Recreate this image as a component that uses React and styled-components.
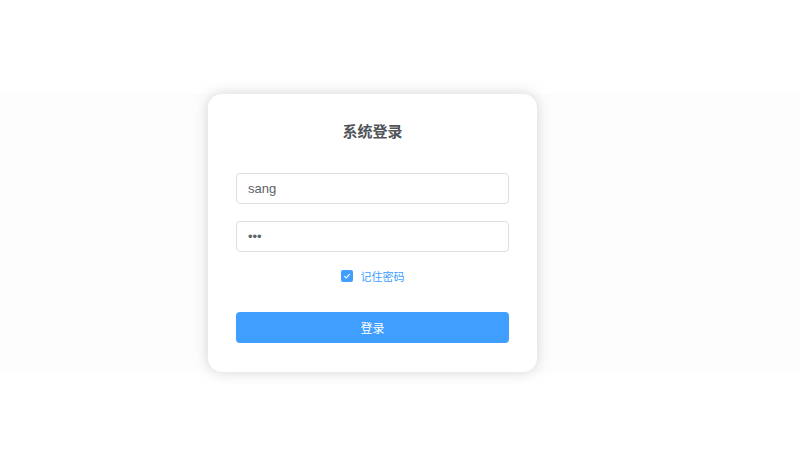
import React from "react";
import styled, { createGlobalStyle } from "styled-components";

const GlobalStyle = createGlobalStyle`
  html, body {
    margin: 0;
    padding: 0;
    background: #ffffff;
    font-family: "Liberation Sans", "Noto Sans CJK SC", Arial, sans-serif;
  }
`;

const Page = styled.div`
  width: 800px;
  height: 452px;
  padding-top: 94px;
  box-sizing: border-box;
`;

const Band = styled.div`
  display: flex;
  background: #fdfdfd;
  padding-left: 208px;
`;

const Card = styled.form`
  width: 329px;
  height: 278px;
  box-sizing: border-box;
  padding: 29px 28px 0;
  background: #ffffff;
  border-radius: 14px;
  box-shadow: 0 0 14px rgba(180, 176, 176, 0.55);
  display: flex;
  flex-direction: column;
`;

const Title = styled.h3`
  margin: 0 0 32px;
  height: 18px;
  line-height: 18px;
  text-align: center;
  font-size: 15px;
  font-weight: 700;
  color: #505458;
`;

const Field = styled.input`
  display: block;
  width: 100%;
  height: 31px;
  box-sizing: border-box;
  margin: 0 0 ${(p) => p.$gap}px;
  padding: 0 11px;
  border: 1px solid #dcdfe6;
  border-radius: 4px;
  font-family: "Liberation Sans", "Noto Sans CJK SC", Arial, sans-serif;
  font-size: 13px;
  color: #606266;
  outline: none;
  background: #fff;
`;

const Remember = styled.label`
  display: flex;
  align-items: center;
  justify-content: center;
  gap: 8px;
  height: 14px;
  margin-bottom: 29px;
  font-size: 11px;
  color: #409eff;
  cursor: pointer;
`;

const Box = styled.span`
  width: 12px;
  height: 12px;
  border-radius: 2px;
  background: #409eff;
  display: flex;
  align-items: center;
  justify-content: center;
`;

const Submit = styled.button`
  width: 100%;
  height: 31px;
  border: none;
  border-radius: 4px;
  background: #409eff;
  color: #ffffff;
  font-family: "Liberation Sans", "Noto Sans CJK SC", Arial, sans-serif;
  font-size: 12px;
  cursor: pointer;
`;

export default function App() {
  return (
    <>
      <GlobalStyle />
      <Page>
        <Band>
          <Card onSubmit={(e) => e.preventDefault()}>
            <Title>系统登录</Title>
            <Field type="text" defaultValue="sang" $gap={17} />
            <Field type="password" defaultValue="123" $gap={17} />
            <Remember>
              <Box>
                <svg width="8" height="8" viewBox="0 0 8 8">
                  <path
                    d="M1.3 4.1 L3.2 5.9 L6.7 2.2"
                    fill="none"
                    stroke="#fff"
                    strokeWidth="1.2"
                  />
                </svg>
              </Box>
              记住密码
            </Remember>
            <Submit type="submit">登录</Submit>
          </Card>
        </Band>
      </Page>
    </>
  );
}
